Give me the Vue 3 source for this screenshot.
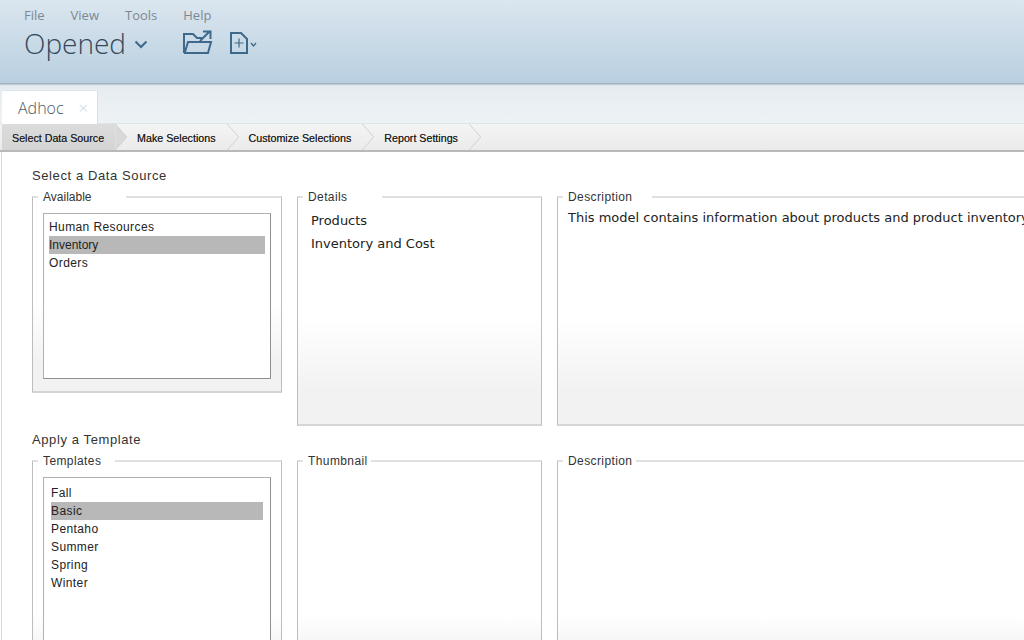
<script setup>
const menus = ["File", "View", "Tools", "Help"];
const steps = ["Select Data Source", "Make Selections", "Customize Selections", "Report Settings"];
const sources = ["Human Resources", "Inventory", "Orders"];
const templates = ["Fall", "Basic", "Pentaho", "Summer", "Spring", "Winter"];
</script>

<template>
  <div class="app">
    <header class="toolbar">
      <nav class="menu">
        <span v-for="m in menus" :key="m">{{ m }}</span>
      </nav>
      <div class="actions">
        <span class="opened">Opened</span>
        <svg class="chev" width="14" height="9" viewBox="0 0 14 9">
          <path d="M1.500 1.500 7 7l5.500-5.500" fill="none" stroke="#3d6a8c" stroke-width="2" />
        </svg>
        <svg class="open-icon" width="30" height="25" viewBox="0 0 30 25">
          <path d="M1 23V4h9l4 4h5" fill="none" stroke="#3d6a8c" stroke-width="2" />
          <path d="M1 23h24l3-11H5l-3 10" fill="none" stroke="#3d6a8c" stroke-width="2" />
          <path d="M17 11l9-9M20 1.500h7.500V9" fill="none" stroke="#3d6a8c" stroke-width="2" />
        </svg>
        <svg class="new-icon" width="28" height="23" viewBox="0 0 28 23">
          <path d="M1 1h10l6 6v14H1z" fill="none" stroke="#3d6a8c" stroke-width="2" />
          <path d="M9 6.500v9M4.500 11h9" fill="none" stroke="#3d6a8c" stroke-width="1.200" />
          <path d="M21 11l2.500 3 2.500-3" fill="none" stroke="#3d6a8c" stroke-width="1.300" />
        </svg>
      </div>
    </header>

    <div class="tabbar">
      <div class="tab">
        <span class="tab-name">Adhoc</span>
        <span class="tab-close">×</span>
      </div>
    </div>

    <div class="steps">
      <div v-for="(s, i) in steps" :key="s" class="step" :class="{ active: i === 0 }">
        <span class="step-label">{{ s }}</span>
        <svg width="12" height="27" viewBox="0 0 12 27">
          <path d="M0 0 12 13.500 0 27" :fill="i === 0 ? '#d9d9d9' : 'none'" stroke="#cfcfcf" />
        </svg>
      </div>
    </div>

    <main class="content">
      <h2 class="section-title">Select a Data Source</h2>
      <div class="row">
        <fieldset class="panel available">
          <legend class="gap-available">Available</legend>
          <ul class="list">
            <li v-for="s in sources" :key="s" :class="{ selected: s === 'Inventory' }">{{ s }}</li>
          </ul>
        </fieldset>
        <fieldset class="panel details">
          <legend class="gap-details">Details</legend>
          <p class="info">Products</p>
          <p class="info">Inventory and Cost</p>
        </fieldset>
        <fieldset class="panel description">
          <legend class="gap-description">Description</legend>
          <p class="desc-text">This model contains information about products and product inventory</p>
        </fieldset>
      </div>

      <h2 class="section-title second">Apply a Template</h2>
      <div class="row">
        <fieldset class="panel bottom templates">
          <legend class="gap-templates">Templates</legend>
          <ul class="list tall">
            <li v-for="t in templates" :key="t" :class="{ selected: t === 'Basic' }">{{ t }}</li>
          </ul>
        </fieldset>
        <fieldset class="panel bottom details">
          <legend class="gap-thumbnail">Thumbnail</legend>
        </fieldset>
        <fieldset class="panel bottom description">
          <legend class="gap-description2">Description</legend>
        </fieldset>
      </div>
    </main>
  </div>
</template>

<style>
html,
body {
  overflow: hidden;
}
</style>

<style scoped>
.app {
  width: 1024px;
  height: 640px;
  overflow: hidden;
  background: #fff;
  font-family: "Liberation Sans", Arial, sans-serif;
}

.toolbar {
  position: relative;
  height: 84px;
  box-sizing: border-box;
  padding: 8px 0 0 24px;
  background: linear-gradient(#dbe6ef, #b9cfe0);
  border-bottom: 1px solid #a3b2be;
  box-shadow: 0 1px 1px #bfc9d0;
}

.menu {
  display: flex;
  gap: 26px;
  height: 14px;
  font: 13px/14px "Open Sans", sans-serif;
  color: #7c8994;
}

.actions {
  display: flex;
  align-items: flex-start;
  margin-top: 7px;
  height: 32px;
}

.opened {
  font: 300 28px/28px "Open Sans", sans-serif;
  color: #34495c;
}

.chev {
  margin: 11px 0 0 8px;
}

.open-icon {
  margin: 1px 0 0 35px;
}

.new-icon {
  margin: 3px 0 0 17px;
}

.tabbar {
  height: 40px;
  box-sizing: border-box;
  padding: 6px 0 0 2px;
  background: linear-gradient(#e5ecf1, #edf2f5);
  border-bottom: 1px solid #dbe5ec;
}

.tab {
  width: 96px;
  height: 34px;
  box-sizing: border-box;
  display: flex;
  align-items: center;
  padding-left: 16px;
  background: #fff;
  border-right: 1px solid #d5e1ea;
  border-top: 1px solid #dfe7ed;
}

.tab-name {
  font: 300 16px "Open Sans", sans-serif;
  color: #4a5965;
}

.tab-close {
  margin-left: 15px;
  font: 300 17px "Open Sans", sans-serif;
  color: #c8d6e0;
}

.steps {
  display: flex;
  height: 28px;
  box-sizing: border-box;
  padding-left: 2px;
  background: linear-gradient(#f4f4f4, #ebebeb);
  border-bottom: 2px solid #b9b9b9;
}

.step {
  display: flex;
  height: 26px;
}

.step svg {
  display: block;
  flex: none;
  height: 26px;
}

.step-label {
  height: 26px;
  padding: 0 11px 0 10px;
  font-size: 10.700px;
  line-height: 28px;
  color: #1c1c1c;
  text-shadow: 0 0 0.400px #666;
}

.step.active .step-label {
  background: linear-gradient(#dcdcdc, #d4d4d4);
}

.content {
  height: 488px;
  box-sizing: border-box;
  padding: 15px 0 0 30px;
  border-left: 1px solid #cfdce6;
  margin-left: 1px;
}

.section-title {
  margin: 0;
  font-size: 13px;
  font-weight: 400;
  line-height: 17px;
  letter-spacing: 0.600px;
  color: #333;
}

.section-title.second {
  margin-top: 5px;
}

.row {
  display: flex;
  gap: 15px;
  margin-top: 6px;
  align-items: flex-start;
}

.panel {
  margin: 0;
  padding: 0;
  min-width: 0;
  flex: none;
  box-sizing: border-box;
  border: 1px solid #bdbdbd;
  border-top: 2px solid #e0e0e0;
  border-bottom: 2px solid #d5d5d5;
  background: linear-gradient(#fff 54%, #f2f2f2 85%);
}

.panel legend {
  margin-left: 5px;
  padding: 0 0 0 5px;
  box-sizing: border-box;
  font-size: 12px;
  line-height: 14px;
  letter-spacing: 0.400px;
  color: #333;
}

.panel legend.gap-available {
  width: 88px;
  letter-spacing: 0;
}

.gap-details {
  width: 79px;
}

.gap-description {
  width: 89px;
}

.gap-templates {
  width: 77px;
}

.gap-thumbnail {
  width: 68px;
}

.gap-description2 {
  width: 73px;
}

.available,
.templates {
  width: 250px;
}

.available {
  height: 203px;
}

.details {
  width: 245px;
}

.description {
  width: 600px;
}

.row .details,
.row .description {
  height: 236px;
}

.row .bottom {
  height: 250px;
}

.row .bottom.panel {
  background: linear-gradient(#fff 64%, #f2f2f2 80%);
}

.list {
  height: 166px;
  box-sizing: border-box;
  margin: 9px 10px 0;
  padding: 4px 5px;
  list-style: none;
  background: #fff;
  border: 1px solid #8f8f8f;
  border-top-color: #b0b0b0;
  border-left-color: #b0b0b0;
  font-size: 12px;
  line-height: 18px;
  letter-spacing: 0.400px;
  color: #222;
}

.list.tall {
  height: 220px;
  padding: 6px 7px;
}

.list li.selected {
  background: #b8b8b8;
}

.available .list li.selected {
  letter-spacing: 0;
}

.info {
  margin: 0 0 0 13px;
  font: 13px/23px "DejaVu Sans", sans-serif;
  color: #222;
}

.details > .info:first-of-type {
  margin-top: 5px;
}

.desc-text {
  margin: 5px 0 0 10px;
  white-space: nowrap;
  font: 13px/17px "DejaVu Sans", sans-serif;
  color: #222;
}
</style>
